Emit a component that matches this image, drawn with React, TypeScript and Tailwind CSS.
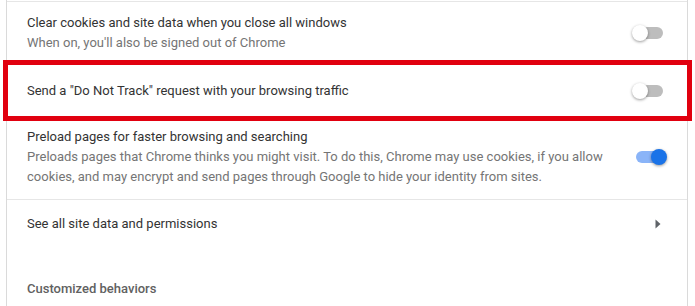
function Toggle(props: { on: boolean }) {
    return (
        <div className="relative w-[35px] h-4 shrink-0">
            <div className={`absolute top-[2px] left-[4px] w-[27px] h-3 rounded-full ${props.on ? 'bg-[#8ab4f8]' : 'bg-[#bdbdbd]'}`} />
            <div
                className={`absolute top-0 w-4 h-4 rounded-full ${props.on ? 'left-[19px] bg-[#1a73e8] shadow-[0_1px_3px_rgba(0,0,0,0.4)]' : 'left-0 bg-white shadow-[0_1px_3px_rgba(0,0,0,0.4)]'}`}
            />
        </div>
    );
}

export default function App() {
    return (
        <div
            className="relative w-[695px] h-[306px] bg-white overflow-hidden text-[13px] leading-5 text-[#333333]"
            style={{ fontFamily: 'Roboto, "Liberation Sans", sans-serif' }}
        >
            <div className="ml-[6px] w-[682px] h-full border-x border-[#dadada] pt-px">
                {/* clear cookies */}
                <div className="h-[62px] border-t border-[#e6e6e6] flex items-center pl-5 pr-5">
                    <div className="flex-1">
                        <div>Clear cookies and site data when you close all windows</div>
                        <div className="text-[#757575]">When on, you'll also be signed out of Chrome</div>
                    </div>
                    <Toggle on={false} />
                </div>

                {/* do not track */}
                <div className="h-[54px] border-t border-[#e6e6e6] flex items-center pl-5 pr-5">
                    <div className="flex-1">Send a "Do Not Track" request with your browsing traffic</div>
                    <Toggle on={false} />
                </div>

                {/* preload */}
                <div className="h-[82px] border-t border-[#e6e6e6] flex items-center pl-5 pr-5 pb-[3px]">
                    <div className="flex-1">
                        <div>Preload pages for faster browsing and searching</div>
                        <div className="text-[#757575]">
                            Preloads pages that Chrome thinks you might visit. To do this, Chrome may use cookies, if you allow
                            <br />
                            cookies, and may encrypt and send pages through Google to hide your identity from sites.
                        </div>
                    </div>
                    <Toggle on={true} />
                </div>

                {/* site data */}
                <div className="h-[49px] border-t border-[#e6e6e6] flex items-center pl-5 pr-[26px]">
                    <div className="flex-1">See all site data and permissions</div>
                    <svg width="6" height="10" viewBox="0 0 6 10" className="shrink-0">
                        <path d="M0.5 0.5 L5.5 5 L0.5 9.5 Z" fill="#5f6368" />
                    </svg>
                </div>

                <div className="pl-5 pt-[31px] font-medium text-[#616161]">Customized behaviors</div>
            </div>

            {/* red highlight */}
            <div className="absolute left-[3px] top-[60px] w-[689px] h-[61px] border-[5px] border-[#e1000f]" />
        </div>
    );
}
